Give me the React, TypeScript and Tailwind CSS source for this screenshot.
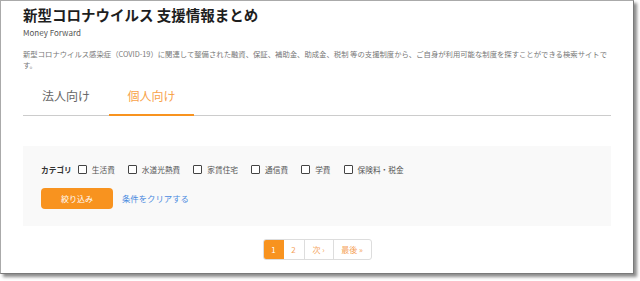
import React from "react";

const categories = ["生活費", "水道光熱費", "家賃住宅", "通信費", "学費", "保険料・税金"];

export default function App() {
  return (
    <div className="w-[640px] h-[281px] bg-white" style={{ fontFamily: '"Noto Sans CJK JP", "Noto Sans", sans-serif' }}>
      <div className="w-[634px] h-[274px] border border-[#aaa] border-r-[#7a7a7a] border-b-[#7a7a7a] bg-white shadow-[3px_3px_3px_rgba(0,0,0,0.45)] px-[22px] pt-[4px]">
        <h1 className="text-[14.5px] leading-[20px] font-bold text-[#1e1e1e]">新型コロナウイルス 支援情報まとめ</h1>
        <p className="mt-[2px] text-[8px] leading-[12px] text-[#555]">Money Forward</p>
        <p className="mt-[9px] text-[7.35px] leading-[11px] text-[#777]">
          新型コロナウイルス感染症（COVID-19）に関連して整備された融資、保証、補助金、助成金、税制 等の支援制度から、ご自身が利用可能な制度を探すことができる検索サイトで
          <br />
          す。
        </p>

        <div className="mt-[9px] flex border-b border-[#ccc]">
          <button className="w-[86px] h-[36px] pb-[2px] text-[12px] leading-[16px] text-[#666]">法人向け</button>
          <button className="w-[85px] h-[37px] pb-[2px] -mb-px border-b-2 border-[#f8931f] text-[12px] leading-[16px] text-[#f8a24a]">個人向け</button>
        </div>

        <div className="mt-[30px] bg-[#f9f9f9] px-[18px] pt-[18px] pb-[17px]">
          <div className="flex items-center h-[11px] text-[7.7px] text-[#555]">
            <span className="font-bold text-[#333] mr-[6px]">カテゴリ</span>
            {categories.map((c) => (
              <label key={c} className="flex items-center mr-[13px]">
                <span className="w-[9px] h-[9px] border border-[#444] rounded-[1px] bg-white mr-[5px]" />
                {c}
              </label>
            ))}
          </div>
          <div className="mt-[13px] flex items-center">
            <button className="w-[72px] h-[21px] rounded-[4px] bg-[#f8931f] text-white text-[8px]">絞り込み</button>
            <a className="ml-[9px] text-[8.4px] text-[#4a8ae0]">条件をクリアする</a>
          </div>
        </div>

        <div className="mt-[13px] flex justify-center">
          <div className="flex h-[21px] border border-[#ddd] rounded-[3px] overflow-hidden text-[8px] text-[#f5a35a]">
            <span className="w-[20px] flex items-center justify-center bg-[#f8931f] text-white">1</span>
            <span className="w-[21px] flex items-center justify-center border-r border-[#ddd]">2</span>
            <span className="w-[29px] flex items-center justify-center border-r border-[#ddd]">次 ›</span>
            <span className="w-[37px] flex items-center justify-center">最後 »</span>
          </div>
        </div>
      </div>
    </div>
  );
}
